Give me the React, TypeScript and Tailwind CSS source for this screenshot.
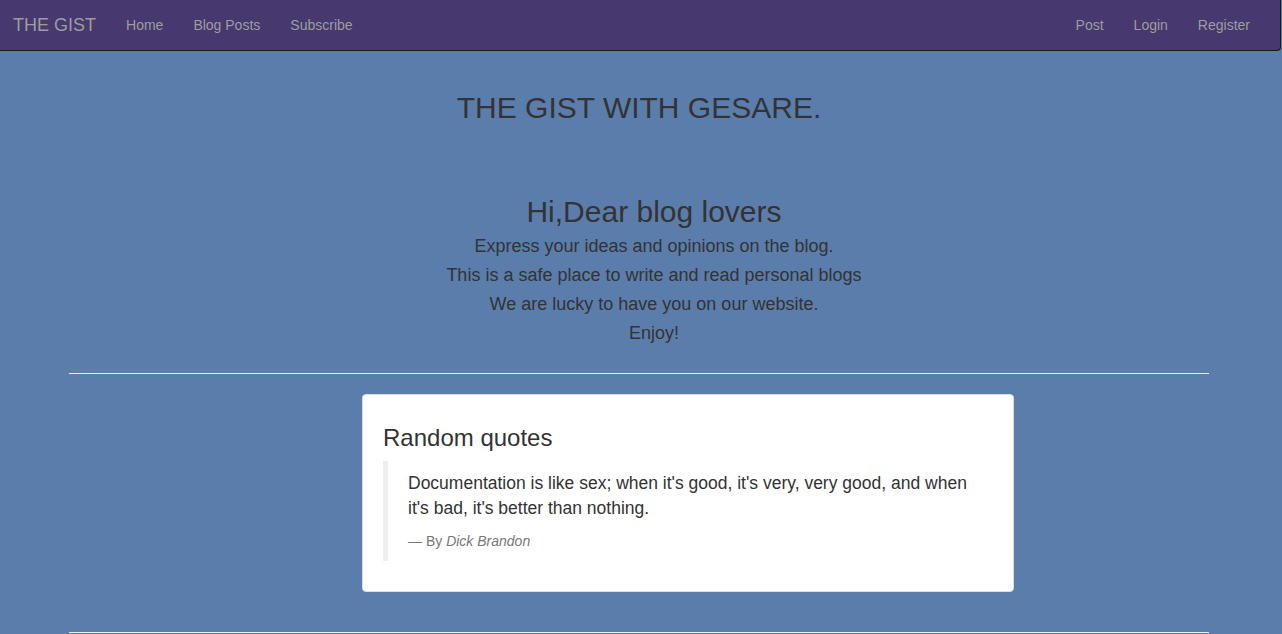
export default function App() {
  const font = { fontFamily: '"Liberation Sans", Arial, sans-serif' };
  return (
    <div className="min-h-[634px] w-[1282px] bg-[#5b7dab] text-[#333]" style={font}>
      <nav className="flex h-[51px] w-[1281px] items-center justify-between rounded-br-[4px] border-r border-b border-[#1a1a1a] bg-[#473870] pr-[15px] text-[14px] text-[#9d9d9d]">
        <div className="flex items-center">
          <span className="pl-[13px] pr-[15px] text-[18px]">THE GIST</span>
          <a className="px-[15px]">Home</a>
          <a className="px-[15px]">Blog Posts</a>
          <a className="px-[15px]">Subscribe</a>
        </div>
        <div className="flex items-center">
          <a className="px-[15px]">Post</a>
          <a className="px-[15px]">Login</a>
          <a className="px-[15px]">Register</a>
        </div>
      </nav>

      <div className="w-[1278px]">
        <div className="mx-auto w-[1140px]">
          <h1 className="mt-[40px] text-center text-[30px] leading-[33px]">THE GIST WITH GESARE.</h1>

          <div className="mt-[71px] pl-[30px] text-center">
            <h2 className="text-[30px] leading-[33px]">Hi,Dear blog lovers</h2>
            <div className="mt-[4px] text-[18px] leading-[29px]">
              <p>Express your ideas and opinions on the blog.</p>
              <p>This is a safe place to write and read personal blogs</p>
              <p>We are lucky to have you on our website.</p>
              <p>Enjoy!</p>
            </div>
          </div>

          <hr className="mt-[25px] border-t border-[#eee]" />

          <div className="mt-[20px] ml-[293px] w-[652px] rounded-[4px] border border-[#ddd] bg-white px-[20px] pt-[30px] pb-[30px]">
            <h3 className="text-[24px] leading-[26px]">Random quotes</h3>
            <blockquote className="mt-[10px] border-l-[5px] border-[#eee] px-[20px] py-[10px]">
              <p className="mb-[10px] text-[17.5px] leading-[25px]">
                Documentation is like sex; when it's good, it's very, very good, and when it's bad, it's better than nothing.
              </p>
              <footer className="text-[14px] leading-[20px] text-[#777]">
                — By <cite className="italic">Dick Brandon</cite>
              </footer>
            </blockquote>
          </div>

          <hr className="mt-[40px] border-t border-[#eee]" />
        </div>
      </div>
    </div>
  );
}
